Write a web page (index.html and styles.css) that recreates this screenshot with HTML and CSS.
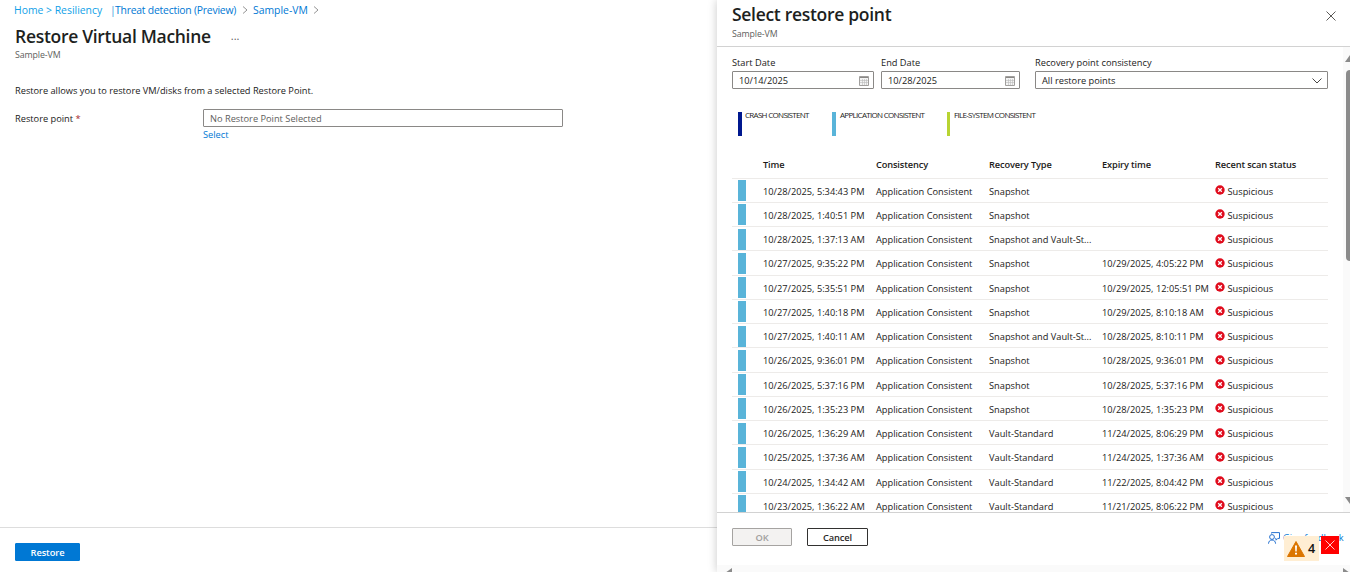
FILE: index.html
```html
<!DOCTYPE html>
<html lang="en">
<head>
	<title>Restore Virtual Machine</title>
	<meta charset="utf-8">
	<meta name="viewport" content="width=device-width, initial-scale=1">

	<link rel="stylesheet" href="styles.css">
</head>
<body>

	<main class="blade">
		<nav class="breadcrumb">
			<a class="crumb-light" href="#">Home &gt; Resiliency</a>
			<span class="crumb-bar">|</span>
			<a class="crumb-threat" href="#">Threat detection (Preview)</a>
			<svg class="crumb-arrow" viewBox="0 0 6 8"><path d="M1 .5 5 4 1 7.5"/></svg>
			<a class="crumb-vm" href="#">Sample-VM</a>
			<svg class="crumb-arrow" viewBox="0 0 6 8"><path d="M1 .5 5 4 1 7.5"/></svg>
		</nav>

		<header class="blade-header">
			<h1>Restore Virtual Machine</h1>
			<span class="more">...</span>
		</header>
		<p class="subtitle">Sample-VM</p>

		<p class="intro">Restore allows you to restore VM/disks from a selected Restore Point.</p>

		<div class="form-row">
			<label for="restore-point">Restore point <span class="required">*</span></label>
			<div>
				<input id="restore-point" class="input" type="text" placeholder="No Restore Point Selected" readonly>
				<a class="select-link" href="#">Select</a>
			</div>
		</div>

		<footer class="blade-footer">
			<button class="btn btn-primary">Restore</button>
		</footer>
	</main>

	<aside class="panel">
		<header class="panel-header">
			<div>
				<h2>Select restore point</h2>
				<p class="subtitle">Sample-VM</p>
			</div>
			<svg class="close" viewBox="0 0 10 10"><path d="M.5 .5l9 9M9.5 .5l-9 9"/></svg>
		</header>

		<div class="panel-body">
			<div class="panel-content">
				<div class="filters">
					<div class="filter">
						<span class="label">Start Date</span>
						<div class="field"><span>10/14/2025</span><svg class="calendar" viewBox="0 0 10 10"><use href="#calendar"/></svg></div>
					</div>
					<div class="filter filter-end">
						<span class="label">End Date</span>
						<div class="field"><span>10/28/2025</span><svg class="calendar" viewBox="0 0 10 10"><use href="#calendar"/></svg></div>
					</div>
					<div class="filter filter-type">
						<span class="label">Recovery point consistency</span>
						<div class="field"><span>All restore points</span><svg class="chevron" viewBox="0 0 10 6"><path d="M.5 .5 5 5 9.5 .5"/></svg></div>
					</div>
				</div>

				<div class="legend">
					<span class="legend-item crash">CRASH CONSISTENT</span>
					<span class="legend-item app">APPLICATION CONSISTENT</span>
					<span class="legend-item file">FILE-SYSTEM CONSISTENT</span>
				</div>

				<div class="table">
					<div class="row head"><i></i><span>Time</span><span>Consistency</span><span>Recovery Type</span><span>Expiry time</span><span>Recent scan status</span></div>
					<div class="row"><i class="mark"></i><span>10/28/2025, 5:34:43 PM</span><span>Application Consistent</span><span>Snapshot</span><span></span><span class="status"><svg viewBox="0 0 10 10"><use href="#error"/></svg>Suspicious</span></div>
					<div class="row"><i class="mark"></i><span>10/28/2025, 1:40:51 PM</span><span>Application Consistent</span><span>Snapshot</span><span></span><span class="status"><svg viewBox="0 0 10 10"><use href="#error"/></svg>Suspicious</span></div>
					<div class="row"><i class="mark"></i><span>10/28/2025, 1:37:13 AM</span><span>Application Consistent</span><span>Snapshot and Vault-St...</span><span></span><span class="status"><svg viewBox="0 0 10 10"><use href="#error"/></svg>Suspicious</span></div>
					<div class="row"><i class="mark"></i><span>10/27/2025, 9:35:22 PM</span><span>Application Consistent</span><span>Snapshot</span><span>10/29/2025, 4:05:22 PM</span><span class="status"><svg viewBox="0 0 10 10"><use href="#error"/></svg>Suspicious</span></div>
					<div class="row"><i class="mark"></i><span>10/27/2025, 5:35:51 PM</span><span>Application Consistent</span><span>Snapshot</span><span>10/29/2025, 12:05:51 PM</span><span class="status"><svg viewBox="0 0 10 10"><use href="#error"/></svg>Suspicious</span></div>
					<div class="row"><i class="mark"></i><span>10/27/2025, 1:40:18 PM</span><span>Application Consistent</span><span>Snapshot</span><span>10/29/2025, 8:10:18 AM</span><span class="status"><svg viewBox="0 0 10 10"><use href="#error"/></svg>Suspicious</span></div>
					<div class="row"><i class="mark"></i><span>10/27/2025, 1:40:11 AM</span><span>Application Consistent</span><span>Snapshot and Vault-St...</span><span>10/28/2025, 8:10:11 PM</span><span class="status"><svg viewBox="0 0 10 10"><use href="#error"/></svg>Suspicious</span></div>
					<div class="row"><i class="mark"></i><span>10/26/2025, 9:36:01 PM</span><span>Application Consistent</span><span>Snapshot</span><span>10/28/2025, 9:36:01 PM</span><span class="status"><svg viewBox="0 0 10 10"><use href="#error"/></svg>Suspicious</span></div>
					<div class="row"><i class="mark"></i><span>10/26/2025, 5:37:16 PM</span><span>Application Consistent</span><span>Snapshot</span><span>10/28/2025, 5:37:16 PM</span><span class="status"><svg viewBox="0 0 10 10"><use href="#error"/></svg>Suspicious</span></div>
					<div class="row"><i class="mark"></i><span>10/26/2025, 1:35:23 PM</span><span>Application Consistent</span><span>Snapshot</span><span>10/28/2025, 1:35:23 PM</span><span class="status"><svg viewBox="0 0 10 10"><use href="#error"/></svg>Suspicious</span></div>
					<div class="row"><i class="mark"></i><span>10/26/2025, 1:36:29 AM</span><span>Application Consistent</span><span>Vault-Standard</span><span>11/24/2025, 8:06:29 PM</span><span class="status"><svg viewBox="0 0 10 10"><use href="#error"/></svg>Suspicious</span></div>
					<div class="row"><i class="mark"></i><span>10/25/2025, 1:37:36 AM</span><span>Application Consistent</span><span>Vault-Standard</span><span>11/24/2025, 1:37:36 AM</span><span class="status"><svg viewBox="0 0 10 10"><use href="#error"/></svg>Suspicious</span></div>
					<div class="row"><i class="mark"></i><span>10/24/2025, 1:34:42 AM</span><span>Application Consistent</span><span>Vault-Standard</span><span>11/22/2025, 8:04:42 PM</span><span class="status"><svg viewBox="0 0 10 10"><use href="#error"/></svg>Suspicious</span></div>
					<div class="row"><i class="mark"></i><span>10/23/2025, 1:36:22 AM</span><span>Application Consistent</span><span>Vault-Standard</span><span>11/21/2025, 8:06:22 PM</span><span class="status"><svg viewBox="0 0 10 10"><use href="#error"/></svg>Suspicious</span></div>
				</div>
			</div>

			<div class="scroll-y">
				<svg viewBox="0 0 10 7"><path d="M5 0 10 7H0z"/></svg>
				<div class="thumb"></div>
				<svg viewBox="0 0 10 7"><path d="M0 0h10L5 7z"/></svg>
			</div>
		</div>

		<footer class="panel-footer">
			<button class="btn btn-disabled" disabled>OK</button>
			<button class="btn btn-cancel">Cancel</button>
			<a class="feedback" href="#">
				<svg viewBox="0 0 12 12"><circle cx="4" cy="5" r="2.4"/><path d="M.5 11.7C.7 9.2 2 8 4 8s3.400 1.200 3.600 3.700M3.500 1.500V.6h8v5.800H9.800L8 8.200V6.400h-.6"/></svg>
				<span>Give feedback</span>
			</a>
		</footer>

		<div class="scroll-x">
			<svg viewBox="0 0 7 10"><path d="M7 0v10L0 5z"/></svg>
			<svg viewBox="0 0 7 10"><path d="M0 0v10l7-5z"/></svg>
		</div>

		<div class="warnings">
			<div class="warning-count">
				<svg viewBox="0 0 18 16"><path d="M9 .5 17.500 15.500H.5z" fill="#db7500" stroke="#db7500" stroke-linejoin="round"/><path d="M8 4.500h2l-.3 6H8.300zM8 11.700h2v1.900H8z" fill="#fff"/></svg>
				<span>4</span>
			</div>
			<div class="warning-close"><svg viewBox="0 0 10 10"><path d="M.5 .5l9 9M9.500 .5l-9 9"/></svg></div>
		</div>
	</aside>

	<!-- Shared icons -->
	<svg class="sprite">
		<symbol id="error" viewBox="0 0 10 10">
			<circle cx="5" cy="5" r="4.700" fill="#e00b1c"/>
			<path d="M3.200 3.200l3.600 3.600M6.800 3.200 3.200 6.800" stroke="#fff" stroke-width="1.300"/>
		</symbol>
		<symbol id="calendar" viewBox="0 0 10 10">
			<path d="M.5 .5h9v9h-9z" fill="#f4f4f4" stroke="#a19f9d"/>
			<path d="M1 1.500h8" stroke="#8a8886"/>
			<path d="M1 4.500h8M1 6.500h8M3.500 3v6M5.500 3v6M7.500 3v6" stroke="#bbb" stroke-width=".6"/>
		</symbol>
	</svg>

</body>
</html>
```
FILE: styles.css
```css
*,
*:before,
*:after {
	box-sizing: border-box;
}

body {
	background-color: #ffffff;
	color: #1b1a19;
	display: flex;
	font-family: "Open Sans", "Noto Sans", sans-serif;
	font-size: 9.25px;
	height: 572px;
	line-height: 12px;
	margin: 0;
	overflow: hidden;
	width: 1350px;
}

h1,
h2,
p {
	margin: 0;
}

h1,
h2 {
	color: #201f1e;
	font-size: 17.5px;
	font-weight: 600;
	letter-spacing: -0.3px;
	line-height: 24px;
}

a {
	color: #0078d4;
	text-decoration: none;
}

svg {
	display: block;
	fill: none;
	flex: none;
}

.sprite {
	height: 0;
	position: absolute;
	width: 0;
}

.subtitle {
	color: #605e5c;
	font-size: 8.8px;
	letter-spacing: -0.1px;
}

/* Left blade */

.blade {
	display: flex;
	flex-direction: column;
	height: 572px;
	width: 717px;
}

.breadcrumb {
	align-items: center;
	display: flex;
	font-size: 10.4px;
	height: 20px;
	padding-left: 14px;
	white-space: pre;
}

.crumb-light {
	color: #109fe8;
	width: 96px;
}

.crumb-bar {
	color: #3a96dd;
	width: 5px;
}

.crumb-threat {
	letter-spacing: -0.22px;
	width: 127px;
}

.crumb-vm {
	margin-left: 5px;
	width: 60px;
}

.crumb-arrow {
	height: 8px;
	stroke: #888888;
	stroke-width: 0.9;
	width: 6px;
}

.blade-header {
	align-items: center;
	display: flex;
	margin-top: 4px;
	padding-left: 15px;
}

.more {
	color: #605e5c;
	font-size: 11px;
	margin-left: 20px;
}

.blade > .subtitle {
	margin-top: 1px;
	padding-left: 15px;
}

.intro {
	letter-spacing: -0.01px;
	margin: 24px 0 0 15px;
}

.form-row {
	display: grid;
	grid-template-columns: 188px 360px;
	line-height: 18px;
	margin: 12px 0 0 15px;
}

.form-row label {
	padding-top: 1px;
}

.required {
	color: #a4262c;
}

.input {
	border: 1px solid #8a8886;
	border-radius: 1px;
	color: #605e5c;
	display: block;
	font: inherit;
	height: 18px;
	padding: 1px 6px 0;
	width: 100%;
}

.input::placeholder {
	color: #605e5c;
	opacity: 1;
}

.select-link {
	display: block;
	line-height: 16px;
}

.blade-footer {
	border-top: 1px solid #dddddd;
	height: 45px;
	margin-top: auto;
	padding: 15px;
}

.btn {
	border: 1px solid;
	border-radius: 1px;
	display: block;
	font: 600 9.3px/18px "Open Sans", "Noto Sans", sans-serif;
	height: 18px;
	letter-spacing: -0.1px;
	padding: 0;
}

.btn-primary {
	background-color: #0078d4;
	border-color: #0078d4;
	color: #ffffff;
	width: 65px;
}

/* Restore point panel */

.panel {
	background-color: #ffffff;
	box-shadow: 0 0 9px rgba(0, 0, 0, 0.22);
	display: flex;
	flex-direction: column;
	height: 572px;
	position: relative;
	width: 633px;
}

.panel-header {
	border-bottom: 1px solid #d2d2d2;
	display: flex;
	height: 47px;
	justify-content: space-between;
	padding: 2px 14px 0 15px;
}

.panel-header .subtitle {
	margin-top: 2px;
}

.close {
	height: 10px;
	margin-top: 9px;
	stroke: #484644;
	stroke-width: 0.9;
	width: 10px;
}

.panel-body {
	display: flex;
	height: 465px;
	overflow: hidden;
}

.panel-content {
	padding: 10px 15px 0;
	width: 626px;
}

.filters {
	display: flex;
}

.filter {
	width: 142px;
}

.filter-end {
	margin-left: 7px;
	width: 139px;
}

.filter-type {
	margin-left: 15px;
	width: 293px;
}

.label {
	display: block;
	height: 14px;
}

.field {
	align-items: center;
	border: 1px solid #8a8886;
	border-radius: 1px;
	display: flex;
	height: 18px;
	justify-content: space-between;
	padding: 1px 4px 0 6px;
}

.calendar {
	height: 10px;
	width: 10px;
}

.chevron {
	height: 6px;
	margin-right: 1px;
	stroke: #484644;
	width: 10px;
}

.legend {
	display: flex;
	font-size: 8px;
	letter-spacing: -0.7px;
	line-height: 6px;
	margin: 23px 0 0 6px;
}

.legend-item {
	border-left: 4px solid;
	height: 24px;
	padding-left: 3px;
	white-space: nowrap;
}

.crash {
	border-left-color: #00188f;
	width: 94px;
}

.app {
	border-left-color: #59b4d9;
	padding-left: 4px;
	width: 115px;
}

.file {
	border-left: 3px solid #b8d432;
	padding-left: 4px;
}

.table {
	margin-top: 14px;
}

.row {
	border-bottom: 1px solid #edebe9;
	display: grid;
	grid-template-columns: 31px repeat(5, 113px);
	height: 24.25px;
	line-height: 25px;
	white-space: nowrap;
}

.head {
	font-weight: 600;
	height: 28.5px;
	letter-spacing: -0.13px;
	line-height: 29px;
}

.mark {
	background-color: #59b4d9;
	height: 21px;
	margin: 1.500px 0 0 6px;
	width: 8px;
}

.status {
	display: flex;
	gap: 3px;
	line-height: 25px;
	margin-left: -0.5px;
}

.status svg {
	height: 10px;
	margin-top: 6.500px;
	width: 10px;
}

.scroll-y {
	align-items: flex-start;
	background-color: #fafafa;
	display: flex;
	flex-direction: column;
	overflow: hidden;
	padding: 8px 0 8px 2px;
	width: 7px;
}

.scroll-y svg {
	fill: #8b8b8b;
	height: 7px;
	width: 10px;
}

.thumb {
	background-color: #8b8b8b;
	border-radius: 4px;
	height: 191px;
	margin: 8px 0 auto 1px;
	width: 9px;
}

.panel-footer {
	border-top: 1px solid #d2d2d2;
	display: flex;
	height: 53px;
	padding: 15px 0 0 15px;
}

.btn-disabled {
	background-color: #f3f2f1;
	border-color: #a5a3a1;
	color: #a19f9d;
	width: 60px;
}

.btn-cancel {
	border-color: #323130;
	background-color: #ffffff;
	color: #292827;
	margin-left: 15px;
	width: 61px;
}

.feedback {
	display: flex;
	gap: 3px;
	margin: 4px 0 0 400px;
	white-space: nowrap;
}

.feedback svg {
	height: 12px;
	stroke: #2672d0;
	width: 12px;
}

.scroll-x {
	background-color: #fafafa;
	display: flex;
	height: 7px;
	justify-content: space-between;
	overflow: hidden;
	padding: 3px 0 0 8px;
}

.scroll-x svg {
	fill: #8b8b8b;
	height: 10px;
	width: 7px;
}

/* Warning badge floats over the feedback link */

.warnings {
	display: flex;
	gap: 2px;
	position: absolute;
	right: 11px;
	top: 536px;
}

.warning-count {
	align-items: center;
	background-color: #ffeed3;
	color: #111111;
	display: flex;
	font-size: 12.5px;
	font-weight: 600;
	gap: 3px;
	height: 25px;
	padding-left: 3px;
	width: 35px;
}

.warning-count svg {
	height: 16px;
	width: 18px;
}

.warning-close {
	background-color: #ff0000;
	height: 18px;
	padding: 4px;
	width: 18px;
}

.warning-close svg {
	height: 10px;
	stroke: #ffffff;
	stroke-width: 0.8;
	width: 10px;
}
```
